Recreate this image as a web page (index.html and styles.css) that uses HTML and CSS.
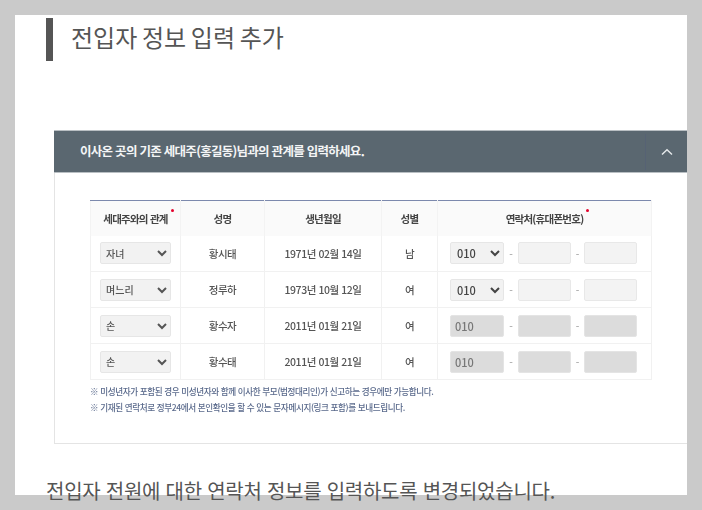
FILE: index.html
```html
<!DOCTYPE html>
<html lang="ko">
<head>
<meta charset="utf-8">
<title>전입자 정보 입력 추가</title>
<link rel="stylesheet" href="styles.css">
</head>
<body>
<main class="panel">
  <h1 class="title">전입자 정보 입력 추가</h1>
  <section class="card">
    <header class="card-head">
      <h2 class="card-title">이사온 곳의 기존 세대주(홍길동)님과의 관계를 입력하세요.</h2>
      <div class="toggle">
        <svg class="chev" width="12" height="8" viewBox="0 0 12 8"><path d="M1 6.5 6 1.8l5 4.7" fill="none" stroke="#e4e8ea" stroke-width="1.5"/></svg>
      </div>
    </header>
    <div class="card-body">
      <table class="grid">
        <colgroup>
          <col class="c1"><col class="c2"><col class="c3"><col class="c4"><col class="c5">
        </colgroup>
        <thead>
          <tr>
            <th><span class="req">세대주와의 관계</span></th>
            <th>성명</th>
            <th>생년월일</th>
            <th>성별</th>
            <th><span class="req">연락처(휴대폰번호)</span></th>
          </tr>
        </thead>
        <tbody>
          <tr>
            <td><select class="sel rel"><option>자녀</option></select></td>
            <td>황시태</td>
            <td>1971년 02월 14일</td>
            <td>남</td>
            <td><div class="phone"><select class="sel tel"><option>010</option></select><span class="dash">-</span><span class="box"></span><span class="dash">-</span><span class="box"></span></div></td>
          </tr>
          <tr>
            <td><select class="sel rel"><option>며느리</option></select></td>
            <td>정루하</td>
            <td>1973년 10월 12일</td>
            <td>여</td>
            <td><div class="phone"><select class="sel tel"><option>010</option></select><span class="dash">-</span><span class="box"></span><span class="dash">-</span><span class="box"></span></div></td>
          </tr>
          <tr>
            <td><select class="sel rel"><option>손</option></select></td>
            <td>황수자</td>
            <td>2011년 01월 21일</td>
            <td>여</td>
            <td><div class="phone"><span class="box off first">010</span><span class="dash">-</span><span class="box off"></span><span class="dash">-</span><span class="box off"></span></div></td>
          </tr>
          <tr>
            <td><select class="sel rel"><option>손</option></select></td>
            <td>황수태</td>
            <td>2011년 01월 21일</td>
            <td>여</td>
            <td><div class="phone"><span class="box off first">010</span><span class="dash">-</span><span class="box off"></span><span class="dash">-</span><span class="box off"></span></div></td>
          </tr>
        </tbody>
      </table>
      <p class="note">※ 미성년자가 포함된 경우 미성년자와 함께 이사한 부모(법정대리인)가 신고하는 경우에만 가능합니다.</p>
      <p class="note">※ 기재된 연락처로 정부24에서 본인확인을 할 수 있는 문자메시지(링크 포함)를 보내드립니다.</p>
    </div>
  </section>
  <p class="caption">전입자 전원에 대한 연락처 정보를 입력하도록 변경되었습니다.</p>
</main>
</body>
</html>
```
FILE: styles.css
```css
* { box-sizing: border-box; }
html, body { margin: 0; height: 510px; overflow: hidden; background: #cacaca; }
body {
  padding: 15px;
  font-family: "Noto Sans CJK KR", "Noto Sans", sans-serif;
}
.panel {
  width: 672px;
  height: 480px;
  background: #fff;
  padding: 3px 0 0 31px;
}
.title {
  margin: 0 0 69px;
  height: 43px;
  border-left: 7px solid #555;
  padding-left: 18px;
  font-size: 24px;
  font-weight: 400;
  line-height: 37px;
  word-spacing: -2px;
  color: #555;
}
.card {
  margin-left: 8px;
  height: 314px;
  border: 1px solid #e4e4e4;
  border-top: 0;
  border-right: 0;
  filter: blur(0.45px);
}
.card-head {
  height: 43px;
  margin-left: -1px;
  background: #5a6770;
  border: 1px solid #b9bfc3;
  border-width: 1px 0;
  display: flex;
  align-items: center;
  justify-content: space-between;
}
.card-title {
  margin: 0 0 2px 26px;
  font-size: 12.5px;
  font-weight: 700;
  letter-spacing: -0.72px;
  color: #f4f5f6;
}
.toggle {
  width: 42px;
  height: 36px;
  border-left: 1px solid #566274;
  display: flex;
  align-items: center;
  justify-content: center;
}
.chev { display: block; }
.card-body { padding: 27px 0 0 35px; }
.grid {
  width: 561px;
  table-layout: fixed;
  border-collapse: collapse;
  font-size: 10.5px;
  font-weight: 500;
  color: #555;
  letter-spacing: -0.45px;
}
.c1 { width: 90px; }
.c2 { width: 84px; }
.c3 { width: 117px; }
.c4 { width: 56px; }
.c5 { width: 214px; }
.grid th, .grid td {
  border: 1px solid #f1f1f1;
  border-top: 0;
  padding: 0;
  text-align: center;
  vertical-align: middle;
  height: 36px;
}
.grid th {
  height: 35px;
  background: #fafafa;
  font-weight: 700;
  color: #444;
  letter-spacing: -0.75px;
  border-bottom: 0;
  border-color: #f3f3f3;
  border-top: 1px solid #7c89ad;
}
.req { position: relative; }
.req::after {
  content: "";
  position: absolute;
  top: -2px;
  right: -6px;
  width: 3px;
  height: 3px;
  border-radius: 50%;
  background: #e4002b;
}
.sel {
  display: block;
  height: 22px;
  margin: 0;
  border: 1px solid #e6e6e6;
  border-radius: 2px;
  background-color: #f2f2f2;
  font-family: inherit;
  font-size: 10px;
  font-weight: 500;
  color: #555;
}
.rel { width: 71px; margin-left: 9px; padding-left: 1px; }
.tel { width: 54px; font-weight: 500; font-size: 11px; padding-left: 2px; color: #444; }
.phone {
  display: flex;
  align-items: center;
  padding-left: 12px;
}
.dash {
  width: 13.5px;
  text-align: center;
  color: #aaa;
  font-size: 10px;
}
.box {
  display: block;
  width: 53px;
  height: 22px;
  background: #f3f3f3;
  border: 1px solid #e8e8e8;
  border-radius: 2px;
}
.box.off { background: #dcdcdc; border-color: #e4e4e4; }
.box.first {
  width: 54px;
  padding-left: 4px;
  text-align: left;
  font-size: 11px;
  font-weight: 500;
  line-height: 20px;
  color: #777;
  letter-spacing: 0;
}
.note {
  margin: 0;
  height: 16px;
  font-size: 8.6px;
  line-height: 16px;
  letter-spacing: -0.4px;
  color: #5a6a8c;
  font-weight: 500;
}
.grid + .note { margin-top: 3px; }
.caption {
  margin: 35px 0 0;
  font-size: 20px;
  line-height: 24px;
  color: #555;
  letter-spacing: -0.26px;
}
```
